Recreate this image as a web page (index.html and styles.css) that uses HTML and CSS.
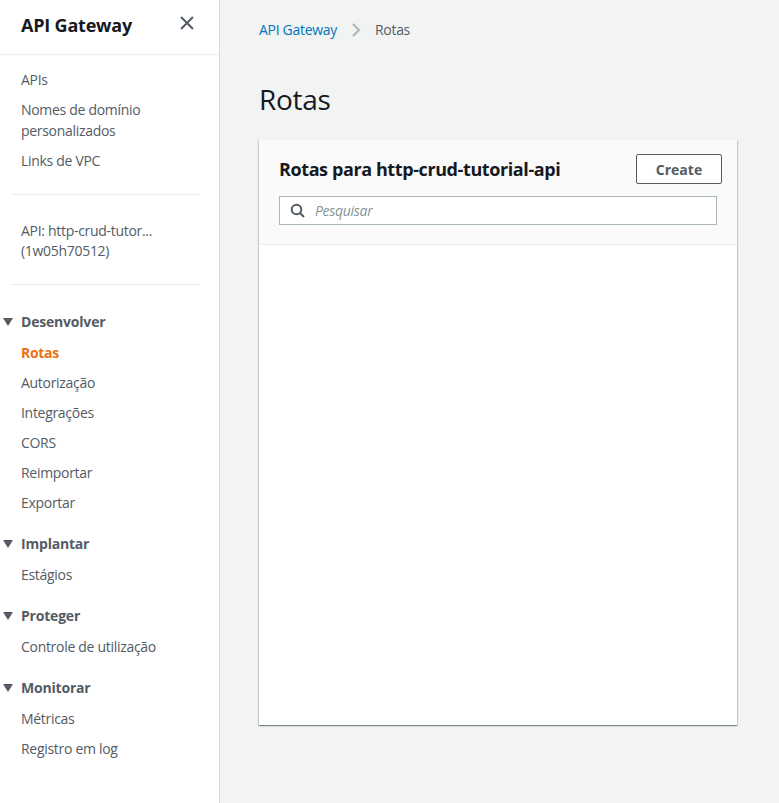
FILE: index.html
```html
<!DOCTYPE html>
<html lang="pt">
<head>
<meta charset="utf-8">
<link rel="stylesheet" href="styles.css">
</head>
<body>
<div class="app">
  <nav class="sidebar">
    <div class="side-header">
      <span class="side-title">API Gateway</span>
      <svg class="close" width="16" height="16" viewBox="0 0 16 16"><path d="M2 2 L14 14 M14 2 L2 14" stroke="#545b64" stroke-width="2" fill="none"/></svg>
    </div>
    <ul class="links top">
      <li>APIs</li>
      <li>Nomes de domínio personalizados</li>
      <li>Links de VPC</li>
    </ul>
    <hr class="div">
    <div class="api-name">API: http-crud-tutor...<br>(1w05h70512)</div>
    <hr class="div">
    <div class="section">
      <div class="sec-title"><span class="tri"></span>Desenvolver</div>
      <ul class="links">
        <li class="active">Rotas</li>
        <li>Autorização</li>
        <li>Integrações</li>
        <li>CORS</li>
        <li>Reimportar</li>
        <li>Exportar</li>
      </ul>
    </div>
    <div class="section">
      <div class="sec-title"><span class="tri"></span>Implantar</div>
      <ul class="links"><li>Estágios</li></ul>
    </div>
    <div class="section">
      <div class="sec-title"><span class="tri"></span>Proteger</div>
      <ul class="links"><li>Controle de utilização</li></ul>
    </div>
    <div class="section">
      <div class="sec-title"><span class="tri"></span>Monitorar</div>
      <ul class="links"><li>Métricas</li><li>Registro em log</li></ul>
    </div>
  </nav>
  <main class="main">
    <div class="crumbs">
      <a class="crumb-link">API Gateway</a>
      <svg class="chev" width="10" height="16" viewBox="0 0 10 16"><path d="M2 2 L8 8 L2 14" stroke="#aab7b8" stroke-width="2" fill="none"/></svg>
      <span class="crumb-cur">Rotas</span>
    </div>
    <h1 class="page-title">Rotas</h1>
    <section class="card">
      <div class="card-head">
        <div class="head-row">
          <h2 class="card-title">Rotas para http-crud-tutorial-api</h2>
          <button class="btn">Create</button>
        </div>
        <div class="search">
          <svg width="16" height="16" viewBox="0 0 16 16"><circle cx="6.5" cy="6.5" r="4.8" stroke="#545b64" stroke-width="2" fill="none"/><path d="M10 10 L14 14" stroke="#545b64" stroke-width="2"/></svg>
          <span class="ph">Pesquisar</span>
        </div>
      </div>
      <div class="card-body"></div>
    </section>
  </main>
</div>
</body>
</html>
```
FILE: styles.css
```css
* { box-sizing: border-box; }
html, body { margin: 0; padding: 0; }
body {
  font-family: "Open Sans", "Noto Sans", sans-serif;
  color: #16191f;
  background: #f2f3f3;
  width: 779px;
  height: 803px;
  overflow: hidden;
}
.app { display: flex; height: 803px; }
.sidebar {
  width: 220px;
  flex: none;
  background: #fff;
  border-right: 1px solid #d5dbdb;
}
.side-header {
  height: 55px;
  border-bottom: 1px solid #eaeded;
  display: flex;
  align-items: center;
  justify-content: space-between;
  padding: 0 24px 4px 21px;
}
.side-title { font-size: 18px; font-weight: 700; letter-spacing: -0.2px; }
.close { margin-top: -4px; }
.links { list-style: none; margin: 0; padding: 0 0 0 21px; }
.links li {
  font-size: 14px;
  line-height: 21px;
  color: #545b64;
  padding: 4.5px 0;
  letter-spacing: -0.3px;
}
.links.top { padding-top: 9px; padding-right: 60px; padding-bottom: 19px; }
.links li.active { color: #ec7211; font-weight: 700; }
.div { border: 0; border-top: 1px solid #eaeded; margin: 0 20px 0 11px; }
.api-name {
  padding: 26px 21px 23px;
  font-size: 14px;
  line-height: 20px;
  color: #545b64;
  letter-spacing: -0.3px;
}
.sidebar > .div + .section { margin-top: 26px; }
.section + .section { margin-top: 16px; }
.sec-title {
  font-size: 14px;
  font-weight: 700;
  line-height: 21px;
  color: #545b64;
  display: flex;
  align-items: center;
  padding: 0 0 5px 3px;
  letter-spacing: -0.2px;
}
.tri {
  width: 0; height: 0;
  border-left: 5px solid transparent;
  border-right: 5px solid transparent;
  border-top: 8px solid #545b64;
  margin-right: 8px;
}
.main { flex: 1; padding: 19px 42px 0 39px; }
.crumbs { display: flex; align-items: center; font-size: 14px; line-height: 22px; letter-spacing: -0.3px; }
.crumb-link { color: #0073bb; }
.chev { margin: 0 14px 0 14px; }
.crumb-cur { color: #545b64; }
.page-title {
  font-size: 28px;
  font-weight: 400;
  margin: 38px 0 0;
  line-height: 40px;
  letter-spacing: -0.3px;
}
.card {
  margin-top: 21px;
  width: 478px;
  height: 585px;
  background: #fff;
  box-shadow: 0 1px 1px 0 rgba(0,28,36,0.3), 1px 1px 1px 0 rgba(0,28,36,0.15), -1px 1px 1px 0 rgba(0,28,36,0.15);
  display: flex;
  flex-direction: column;
}
.card-head {
  background: #fafafa;
  border-bottom: 1px solid #eaeded;
  padding: 14px 15px 19px 20px;
}
.head-row { display: flex; justify-content: space-between; align-items: center; }
.card-title { font-size: 18px; font-weight: 700; margin: 0; letter-spacing: -0.4px; line-height: 30px; }
.btn {
  font-family: inherit;
  font-size: 14px;
  font-weight: 700;
  color: #545b64;
  background: #fff;
  border: 1px solid #545b64;
  border-radius: 2px;
  width: 86px;
  height: 30px;
  padding: 0;
}
.search {
  margin-top: 12px;
  width: 438px;
  height: 29px;
  border: 1px solid #aab7b8;
  background: #fff;
  display: flex;
  align-items: center;
  padding-left: 10px;
  gap: 9px;
}
.ph { font-style: italic; color: #879596; font-size: 14px; letter-spacing: -0.3px; }
.card-body { flex: 1; }
```
